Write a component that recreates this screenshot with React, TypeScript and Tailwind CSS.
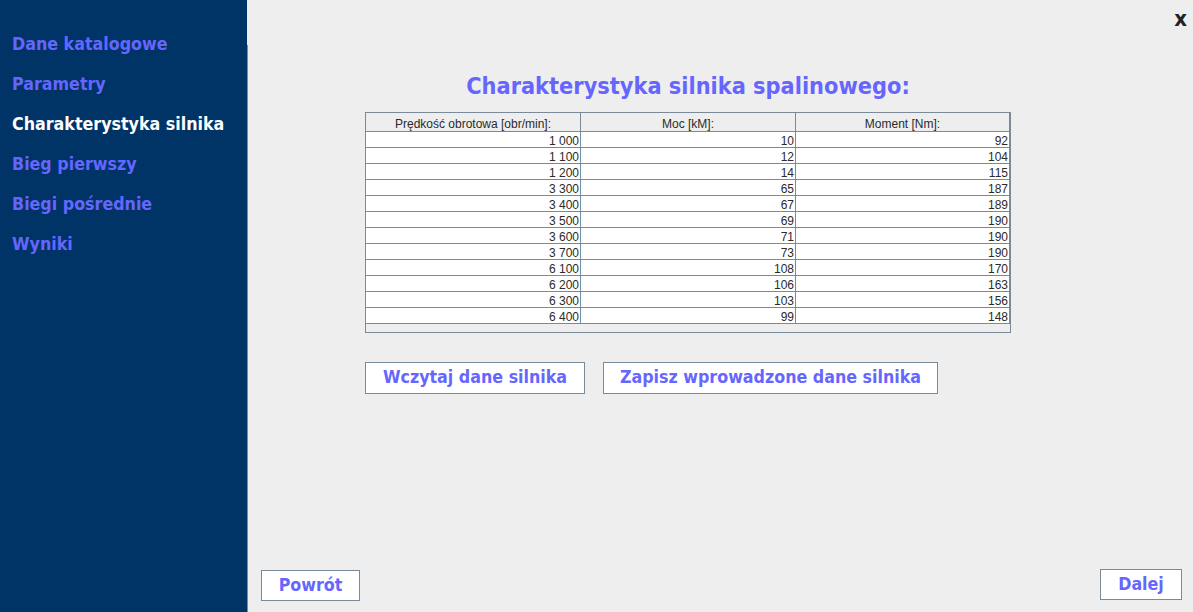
import React from 'react';

const menu = [
  { label: 'Dane katalogowe', active: false },
  { label: 'Parametry', active: false },
  { label: 'Charakterystyka silnika', active: true },
  { label: 'Bieg pierwszy', active: false },
  { label: 'Biegi pośrednie', active: false },
  { label: 'Wyniki', active: false },
];

const rows: [string, string, string][] = [
  ['1 000', '10', '92'],
  ['1 100', '12', '104'],
  ['1 200', '14', '115'],
  ['3 300', '65', '187'],
  ['3 400', '67', '189'],
  ['3 500', '69', '190'],
  ['3 600', '71', '190'],
  ['3 700', '73', '190'],
  ['6 100', '108', '170'],
  ['6 200', '106', '163'],
  ['6 300', '103', '156'],
  ['6 400', '99', '148'],
];

const bold = "font-['DejaVu_Sans_Condensed','DejaVu_Sans',sans-serif] font-bold";

function Button({ children, className = '' }: { children: React.ReactNode; className?: string }) {
  return (
    <button
      className={`${bold} bg-white border border-[#7a8a99] text-[#6666ff] text-[17.7px] leading-none ${className}`}
    >
      {children}
    </button>
  );
}

export default function App() {
  return (
    <div className="flex w-[1193px] h-[612px] bg-[#eeeeee] overflow-hidden">
      <aside className="w-[247px] shrink-0 bg-[#003366] pt-[32px]">
        <ul className="flex flex-col">
          {menu.map((m) => (
            <li
              key={m.label}
              className={`${bold} h-[40px] pl-[12px] text-[17.7px] leading-[24px] ${
                m.active ? 'text-white' : 'text-[#6666ff]'
              }`}
            >
              {m.label}
            </li>
          ))}
        </ul>
      </aside>
      <div className="flex flex-col">
        <div className="h-[45px] w-px" />
        <div className="flex-1 w-px bg-[#6d8cb8]" />
      </div>

      <main className="flex-1 flex flex-col">
        <div className="flex justify-end pr-[6px] pt-[4px] h-[40px]">
          <span className={`${bold} text-[22px] leading-[30px] text-[#222222]`}>x</span>
        </div>

        <div className="w-[646px] ml-[117px] mt-[31px] flex justify-center">
          <h1 className={`${bold} text-[23.3px] leading-[30px] text-[#6666ff] whitespace-nowrap`}>
            Charakterystyka silnika spalinowego:
          </h1>
        </div>

        <div className="ml-[117px] mt-[11px] w-[646px] h-[221px] border border-[#7a8a99] bg-[#eeeeee] font-['Liberation_Sans',Arial,sans-serif]">
          <div className="grid grid-cols-[215px_215px_214px]">
            {['Prędkość obrotowa [obr/min]:', 'Moc [kM]:', 'Moment [Nm]:'].map((h) => (
              <div
                key={h}
                className="h-[19px] border-r border-b border-[#7a8a99] text-[12px] leading-[22px] text-center text-[#2a2a2a] overflow-hidden"
              >
                {h}
              </div>
            ))}
            {rows.map((r, i) =>
              r.map((c, j) => (
                <div
                  key={`${i}-${j}`}
                  className="h-[16px] bg-white border-r border-b border-[#7a8a99] text-[12px] leading-[18px] text-right pr-[1px] text-[#2a2a2a] overflow-hidden"
                >
                  {c}
                </div>
              ))
            )}
          </div>
        </div>

        <div className="flex gap-[18px] ml-[117px] mt-[29px]">
          <Button className="w-[220px] h-[32px]">Wczytaj dane silnika</Button>
          <Button className="w-[335px] h-[32px]">Zapisz wprowadzone dane silnika</Button>
        </div>

        <div className="mt-auto flex justify-between items-end pl-[13px] pr-[11px] pb-[12px]">
          <Button className="w-[99px] h-[31px] mb-[-1px]">Powrót</Button>
          <Button className="w-[82px] h-[31px]">Dalej</Button>
        </div>
      </main>
    </div>
  );
}
